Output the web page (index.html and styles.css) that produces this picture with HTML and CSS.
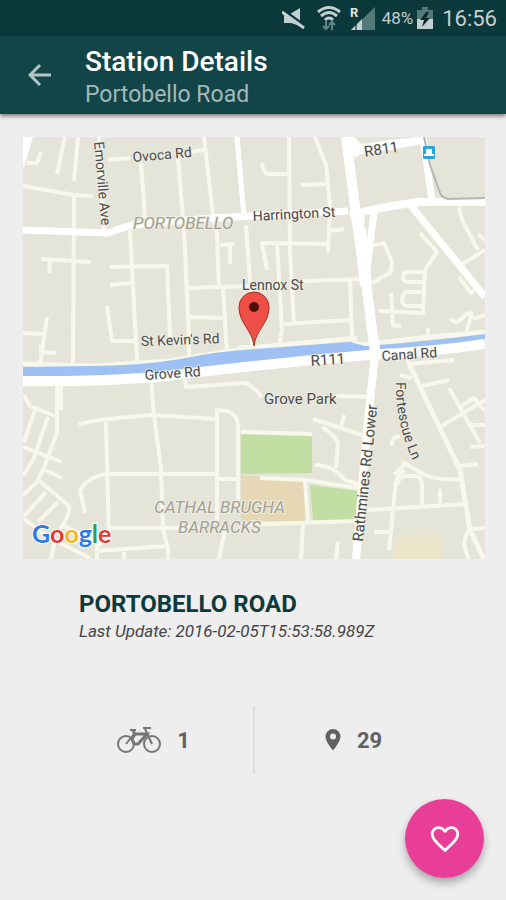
FILE: index.html
```html
<!DOCTYPE html>
<html lang="en">
<head>
    <meta charset="UTF-8">
    <meta name="viewport" content="width=device-width, initial-scale=1.0">
    <title>Station Details</title>
    <link rel="stylesheet" href="styles.css">
</head>
<body>

<div class="status-bar">
    <svg class="mute" width="24" height="24" viewBox="0 0 24 24" aria-hidden="true">
        <path class="fill" d="M2 8h6l10-6v18l-9-3H2z"/>
        <path class="cut" d="M1 4l22 16"/>
        <path class="line" d="M0 6l22 16"/>
    </svg>
    <svg class="wifi" width="24" height="26" viewBox="0 0 24 26" aria-hidden="true">
        <path class="line" d="M1 7q11-9 22 0M4 11q8-7 16 0M8 15q4-4 8 0"/>
        <path class="dim" d="M9 16v8M6 21l3 3 3-3M15 25v-8M12 20l3-3 3 3"/>
    </svg>
    <svg class="signal" width="26" height="26" viewBox="0 0 26 26" aria-hidden="true">
        <path class="dim-fill" d="M25 2v23H1z"/>
        <path class="fill" d="M1 25l4-4v4zM7 25v-6l5-5v11z"/>
        <text class="roaming" x="0" y="12">R</text>
    </svg>
    <span class="percent">48%</span>
    <svg class="battery" width="16" height="24" viewBox="0 0 16 24" aria-hidden="true">
        <path class="dim-fill" d="M5 1h6v3h5v10H0V4h5z"/>
        <path class="fill" d="M0 13h16v10H0z"/>
        <path class="bolt" d="M9 6L3 14h4l-2 7 8-9H9l3-6z"/>
    </svg>
    <span class="time">16:56</span>
</div>

<header class="app-bar">
    <a class="back" href="#" aria-label="Back">
        <svg width="24" height="24" viewBox="0 0 24 24" aria-hidden="true">
            <path d="M23 12H2M12 2L2 12l10 10"/>
        </svg>
    </a>
    <div class="titles">
        <h1>Station Details</h1>
        <p>Portobello Road</p>
    </div>
</header>

<main>
    <svg class="map" viewBox="23 137 462 422">
        <defs>
            <path id="fortescue" d="M396 382Q395 425 416 467"/>
        </defs>
        <rect class="land" x="23" y="137" width="462" height="422"/>

        <!-- parks and blocks -->
        <path class="park" d="M241 434l69 2q2 0 2 2v35l-71 1zM310 485l48 6-3 30-42-1z"/>
        <path class="barracks" d="M241 475l62 5 4 41h-66z"/>
        <path class="sand" d="M397 537l44-3v25h-49z"/>

        <!-- small streets, north of the canal -->
        <path class="street" d="M41 152l-4 11H27M65 137l-8 37M78 137l-4 44M23 186l51 9 19 1M74 195l-1 171M99 137l5 95M108 160l22-2M192 152l12-2M141 163l4 55M178 158l6 72 5 108v20M204 137l9 78 4 20 2 53M130 230l7 131M41 259l50 3M50 261l-1 12M110 267l57-1 3 72M110 285l21-2M107 306l5 35h24M47 317l-7 49M23 333l21 1M41 345v7l15 1M188 288l95-3M190 317l35 1M223 288l4 66M220 245l15-1M230 246v18M246 225l5 70 1 50"/>
        <path class="street" d="M289 137l1 113 4 75M262 163q1 11 8 11h18M315 137l11 28 4 40-2 47M301 185l25-1M329 231l15-2M328 244l-66-1 5 27M277 245l5 85-3 17h-40M303 281l62-2M350 281l2 54q0 8 12 11M284 324l66-4M370 246l14-3 8 19-1 10-19 11M420 233l17 19-12 18-2 43-44-2M423 272h-15q-5 0-5 5t5 5h15M423 292h-15q-5 0-6 7 0 7 6 7h15M391 293l2 32 8 1M459 207l3 13 16 30M461 265l24-15M478 234l7 6M459 277l12 16 8-6-11-13M450 318q7 9 16-4l6-1-6 21M473 319l12-4M428 328v7"/>
        <path class="street wide" d="M23 364l72 2 75-5 80-13 107-10M360 345l70-8 55-5"/>

        <!-- small streets, south of the canal -->
        <path class="street" d="M57 385v48l-12 32-8 17-14 13M61 385v25M24 395l6 11 25 10M35 410l-11 32M48 417l-15 43-10 16M23 447l39 15M45 470l17 8M38 480l30 25q5 4-8 24M46 492l-22 24M58 502l-20 20M23 518l25 19 42 21M64 526l38 19M55 540l-4 19M79 425q7-5 74-10l64 4M106 422l3 118M151 380l3 35 7 55 2 60 5 18v11M85 513l-5-22q6-14 28-17h109M225 530l-6 29M217 524V410q20 0 21 15v86M218 479h20M185 380l1 7 58-4q7 1 18 14M109 528h91M97 551l70-5M97 540v19M124 552v7M241 432l71 2M303 525l-2 34M338 542l-2 17M335 396l37 1M313 419l49 16M344 415l-3 13M322 427q13 8 16 16l-2 25M315 465q18 0 30 15l13 4M260 478l45 2 53 8M305 480l3 43M240 525l116-4"/>
        <path class="street wide" d="M405 355l18 38 37 77 10 60 14 29"/>
        <path class="street" d="M408 364l46-4M400 375l12 3M422 386l27-6M449 388l31 55M440 427l45-27M470 425h15M460 407l14-9 11 13M470 447l15-1M460 466l18-2M402 462l23 13q16 6 37 4M394 475l10-10M404 470l-8 10-7 70M398 485q0-9 8-9h10q6 0 6 9v20M374 532h17M368 510l98-6M440 489v14M392 446q-1-9 8-10M485 528l-14 1q-12 10-2 30"/>

        <!-- canal -->
        <path class="canal" d="M23 367l67-1q50 0 90-7 40-8 75-10l95-7 15 4q60-4 120-12v12l-105 12-130 5q-90 15-227 15z"/>

        <!-- main roads -->
        <path class="road r10" d="M23 381q100 1 160-7 100-12 197-20 50-2 105-10"/>
        <path class="road r7" d="M23 230l85 3q12-5 25-8 60-7 215-14"/>
        <path class="road r5" d="M237 137l7 80"/>
        <path class="road r10" d="M346 137l12 93 9 60 9 70"/>
        <path class="road r12" d="M358 211l8 75"/>
        <path class="road r8" d="M376 345l-9 85-11 129M350 215q40-10 70-13h65"/>
        <path class="road r10" d="M346 150l25-2 51-9"/>
        <path class="road r7" d="M423 137l9 64M374 212l-7 58M408 202l77 95"/>
        <path class="road-fill" d="M23 137h10l-9 30h-1zM346 137h8l13 13-12 8z"/>
        <path class="block" d="M358 137h60l-46 5q-5 1-14-5zM365 214h2l-1 13-2 2z"/>
        <path class="rail" d="M424 137l6 28 9 25q2 8 9 9l37-1"/>

        <g class="stop">
            <rect x="423" y="146" width="12" height="13" rx="1"/>
            <path d="M426 149h6v5h2v2h-10v-2h2z"/>
        </g>

        <!-- labels -->
        <g class="area">
            <text x="133" y="229">PORTOBELLO</text>
            <text x="154" y="513">CATHAL BRUGHA</text>
            <text x="178" y="533">BARRACKS</text>
        </g>
        <g class="label">
            <text transform="translate(94 142) rotate(85)">Emorville Ave</text>
            <text transform="translate(133 162) rotate(-5)">Ovoca Rd</text>
            <text transform="translate(253 221) rotate(-3)">Harrington St</text>
            <text class="big" transform="translate(365 157) rotate(-9)">R811</text>
            <text x="242" y="290">Lennox St</text>
            <text transform="translate(141 346) rotate(-2)">St Kevin's Rd</text>
            <text transform="translate(145 380) rotate(-4)">Grove Rd</text>
            <text class="big" transform="translate(311 366) rotate(-4)">R111</text>
            <text transform="translate(382 361) rotate(-4)">Canal Rd</text>
            <text class="big" x="264" y="404">Grove Park</text>
            <text class="big" transform="translate(363 542) rotate(-84)">Rathmines Rd Lower</text>
            <text><textPath href="#fortescue">Fortescue Ln</textPath></text>
        </g>

        <g class="pin">
            <path d="M254 346c-2-17-15-22-15-39a15 15 0 0 1 30 0c0 17-13 22-15 39z"/>
            <circle cx="254" cy="307" r="5"/>
        </g>

        <text class="google" x="32" y="543"><tspan class="g-blue">G</tspan><tspan class="g-red">o</tspan><tspan class="g-yellow">o</tspan><tspan class="g-blue">g</tspan><tspan class="g-green">l</tspan><tspan class="g-red">e</tspan></text>
    </svg>

    <section class="station">
        <h2>PORTOBELLO ROAD</h2>
        <p>Last Update: 2016-02-05T15:53:58.989Z</p>
    </section>

    <section class="counts">
        <div class="count">
            <svg width="44" height="26" viewBox="0 0 44 26" aria-hidden="true">
                <g class="bike">
                    <circle cx="9" cy="17" r="8"/>
                    <circle cx="35" cy="17" r="8"/>
                    <path d="M13 3h6M26 1h8M28 2l7 15M9 17l8-10"/>
                    <path class="frame" d="M16 4l2 3h12l-9 10h-4l-2-5 3-5"/>
                </g>
            </svg>
            <span>1</span>
        </div>
        <div class="count">
            <svg width="16" height="22" viewBox="0 0 16 22" aria-hidden="true">
                <path class="place" fill-rule="evenodd" d="M8 0a7.500 7.500 0 0 0-7.500 7.500C.5 13 8 21.500 8 21.500s7.500-8.500 7.500-14A7.500 7.500 0 0 0 8 0zm0 4.500a3 3 0 1 1 0 6 3 3 0 0 1 0-6z"/>
            </svg>
            <span>29</span>
        </div>
    </section>
</main>

<button class="fab" type="button" aria-label="Add to favourites">
    <svg width="34" height="34" viewBox="0 0 24 24" aria-hidden="true">
        <path d="M16.500 3c-1.740 0-3.410.81-4.500 2.090C10.910 3.810 9.240 3 7.500 3 4.420 3 2 5.420 2 8.500c0 3.780 3.400 6.860 8.550 11.540L12 21.350l1.450-1.320C18.600 15.360 22 12.280 22 8.500 22 5.420 19.580 3 16.500 3zm-4.400 15.550l-.1.100-.1-.1C7.140 14.240 4 11.390 4 8.500 4 6.500 5.500 5 7.500 5c1.540 0 3.040.99 3.570 2.360h1.870C13.460 5.990 14.960 5 16.500 5c2 0 3.500 1.500 3.500 3.500 0 2.890-3.140 5.740-7.900 10.050z"/>
    </svg>
</button>

</body>
</html>
```

FILE: styles.css
```css
* {
    box-sizing: border-box;
}
body {
    margin: 0;
    min-height: 100vh;
    font-family: Roboto, "Liberation Sans", sans-serif;
    background-color: #eeeeee;
}
h1, h2, p {
    margin: 0;
}

/* status bar */
.status-bar {
    display: flex;
    align-items: center;
    justify-content: flex-end;
    height: 36px;
    padding-right: 9px;
    background-color: #0b383b;
    color: #c3d0d1;
}
.status-bar .fill {
    fill: #c3d0d1;
}
.status-bar .line {
    fill: none;
    stroke: #c3d0d1;
    stroke-width: 3;
}
.status-bar .cut {
    stroke: #0b383b;
    stroke-width: 3;
}
.status-bar .dim {
    fill: none;
    stroke: #5d8587;
    stroke-width: 2;
}
.status-bar .dim-fill {
    fill: #54797b;
}
.status-bar .bolt {
    fill: #0b2b2d;
}
.mute {
    margin-right: 11px;
}
.wifi {
    margin-right: 9px;
}
.signal {
    margin-right: 6px;
}
.roaming {
    font-size: 13px;
    font-weight: bold;
    fill: #dce5e5;
    stroke: #0b383b;
    stroke-width: 2;
    paint-order: stroke;
}
.percent {
    margin-right: 4px;
    font-size: 17px;
}
.battery {
    margin-right: 9px;
}
.time {
    font-size: 22px;
    line-height: 36px;
    padding-top: 2px;
}

/* app bar */
.app-bar {
    display: flex;
    align-items: center;
    height: 78px;
    padding-left: 28px;
    background-color: #124548;
    box-shadow: 0 2px 4px rgba(0, 0, 0, 0.5);
}
.back {
    display: flex;
    margin-right: 33px;
}
.back path {
    fill: none;
    stroke: #b3c6c7;
    stroke-width: 3;
}
.titles {
    padding-top: 4px;
}
.titles h1 {
    font-size: 28px;
    font-weight: 500;
    line-height: 36px;
    color: #ffffff;
}
.titles p {
    font-size: 23px;
    line-height: 30px;
    color: #a3b9ba;
}

/* map */
.map {
    display: block;
    width: calc(100% - 44px);
    margin: 23px 21px 0 23px;
}
.land, .block {
    fill: #e5e4d8;
}
.park {
    fill: #c2dfa3;
}
.barracks {
    fill: #e6d7b5;
}
.sand {
    fill: #ede5ca;
}
.canal {
    fill: #9fc0f2;
}
.street, .road {
    fill: none;
    stroke: #f7f7ec;
    stroke-width: 4;
    stroke-linejoin: round;
}
.wide {
    stroke-width: 5;
}
.road {
    stroke: #ffffff;
}
.r5 { stroke-width: 5; }
.r7 { stroke-width: 7; }
.r8 { stroke-width: 8; }
.r10 { stroke-width: 10; }
.r12 { stroke-width: 12; }
.road-fill {
    fill: #ffffff;
}
.rail {
    fill: none;
    stroke: #b5b5b5;
    stroke-width: 2;
}
.stop rect {
    fill: #2ba3dc;
}
.stop path {
    fill: #ffffff;
}
.label {
    font-size: 14px;
    fill: #4a4a4a;
    stroke: #f1f0e8;
    stroke-width: 2;
    stroke-opacity: 0.7;
    paint-order: stroke;
}
.label .big {
    font-size: 15px;
}
.area {
    font-size: 17px;
    font-style: italic;
    fill: #a19f92;
    stroke: #efeee4;
    stroke-width: 2;
    paint-order: stroke;
}
.pin path {
    fill: #ee5047;
    stroke: #a3302a;
}
.pin circle {
    fill: #4d0f0c;
}
.google {
    font-family: Lato, "Liberation Sans", sans-serif;
    font-size: 25px;
    font-weight: bold;
    stroke: #ffffff;
    stroke-width: 2;
    paint-order: stroke;
}
.g-blue { fill: #3079e0; }
.g-red { fill: #e03b30; }
.g-yellow { fill: #f5b81c; }
.g-green { fill: #2f9e4f; }

/* station info */
.station {
    padding: 30px 79px 0;
}
.station h2 {
    font-size: 24px;
    font-weight: bold;
    line-height: 30px;
    color: #0c3b3e;
}
.station p {
    font-size: 17px;
    font-style: italic;
    line-height: 24px;
    color: #444444;
    white-space: nowrap;
}
.counts {
    display: grid;
    grid-template-columns: 1fr 1fr;
    margin-top: 63px;
}
.count {
    display: flex;
    align-items: center;
    justify-content: center;
    gap: 16px;
    height: 68px;
    padding-left: 54px;
    font-size: 22px;
    font-weight: bold;
    color: #616161;
}
.count + .count {
    padding-right: 54px;
    padding-left: 0;
    border-left: 2px solid #dddddd;
}
.bike {
    fill: none;
    stroke: #757575;
    stroke-width: 2;
}
.bike .frame {
    stroke-width: 3;
}
.place {
    fill: #616161;
}

/* favourite button */
.fab {
    position: fixed;
    right: 22px;
    bottom: 22px;
    display: flex;
    align-items: center;
    justify-content: center;
    width: 79px;
    height: 79px;
    padding: 0;
    border: none;
    border-radius: 50%;
    background-color: #e83e97;
    box-shadow: 0 5px 8px rgba(0, 0, 0, 0.3);
    cursor: pointer;
}
.fab path {
    fill: #ffffff;
}
```
